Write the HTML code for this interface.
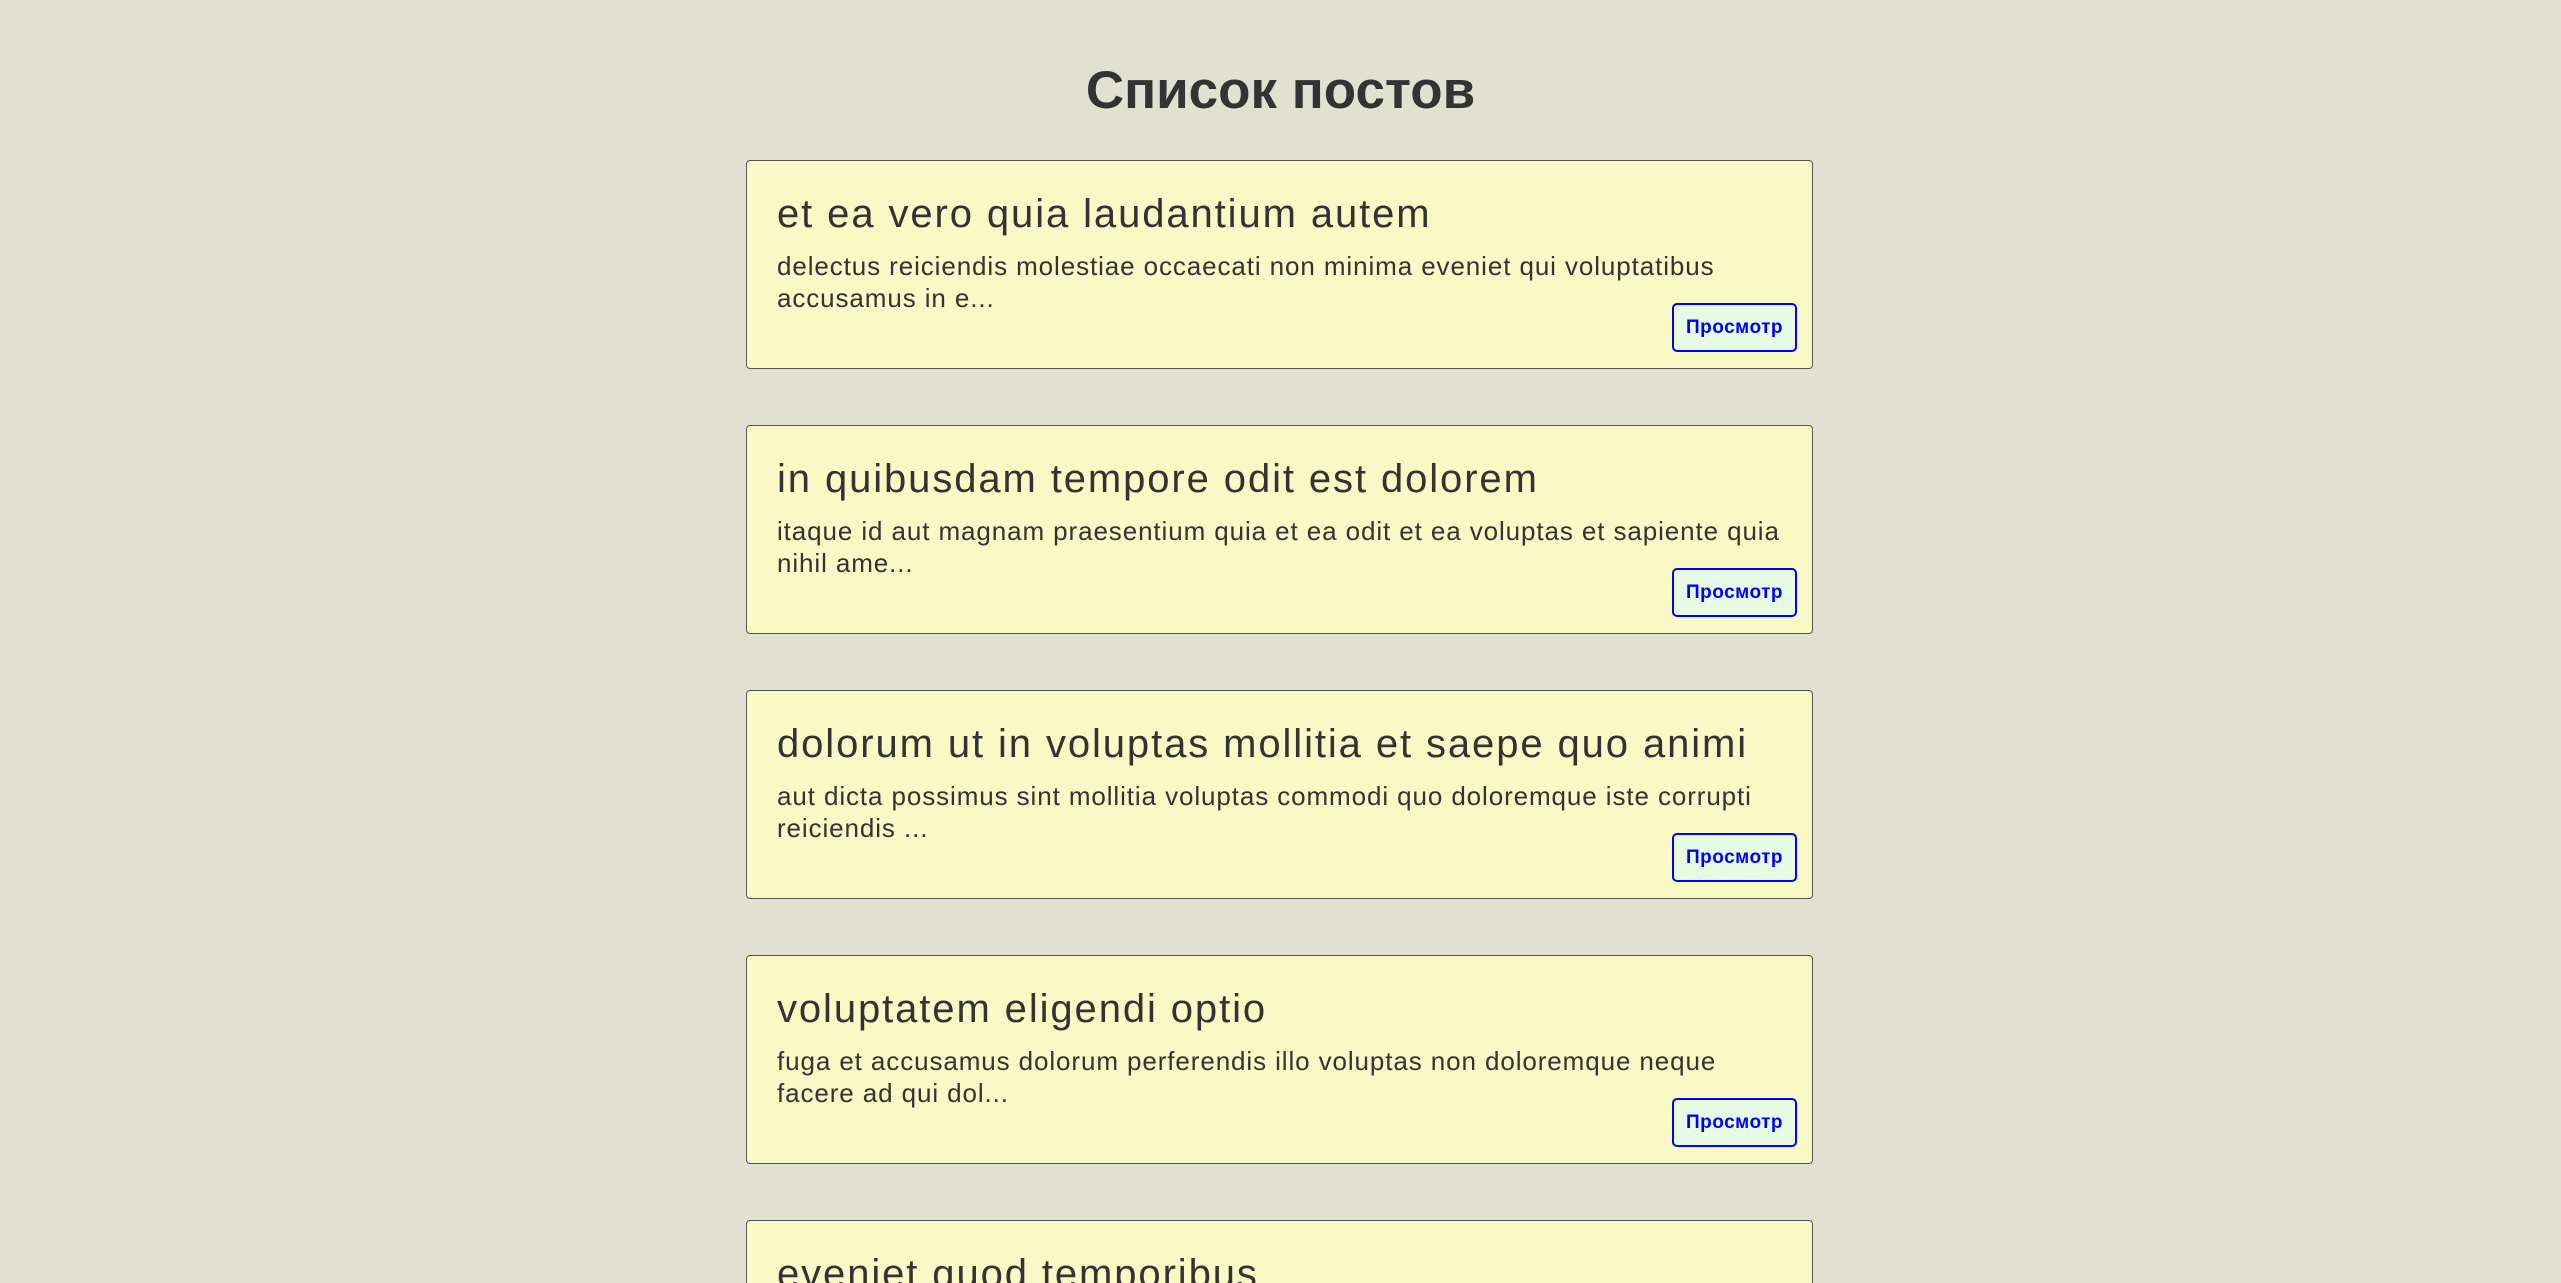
<!DOCTYPE html>
<html><head><meta charset="utf-8"><style>
html,body{margin:0;padding:0;width:2561px;height:1283px;overflow:hidden;background:#e1e1d1;font-family:"Liberation Sans","DejaVu Sans",sans-serif;color:#333;}
#wrap{position:relative;width:2561px;height:1283px;overflow:hidden;}
h1{position:absolute;top:0;left:0;width:2561px;text-align:center;margin:0;font-size:53px;font-weight:bold;line-height:1;padding-top:64px;color:#333;}
.card{position:absolute;left:746px;width:1065px;height:207px;background:#f9f9c5;border:1px solid #555;border-radius:4px;box-sizing:content-box;}
.t{position:absolute;left:30px;top:29px;font-size:40px;line-height:48px;white-space:nowrap;letter-spacing:1.9px;}
.b{position:absolute;left:30px;top:89px;font-size:26px;line-height:32px;white-space:nowrap;letter-spacing:0.9px;}
.btn{position:absolute;right:15px;bottom:16px;width:121px;height:45px;border:2px solid #0000ff;border-radius:5px;background:#e6fae4;color:#0000ff;font-size:19px;font-weight:bold;text-align:center;line-height:45px;letter-spacing:0.5px;}
</style></head><body><div id="wrap">
<h1>Список постов</h1>
<div class="card" style="top:160px"><div class="t">et ea vero quia laudantium autem</div><div class="b">delectus reiciendis molestiae occaecati non minima eveniet qui voluptatibus<br>accusamus in e...</div><div class="btn">Просмотр</div></div>
<div class="card" style="top:425px"><div class="t">in quibusdam tempore odit est dolorem</div><div class="b">itaque id aut magnam praesentium quia et ea odit et ea voluptas et sapiente quia<br>nihil ame...</div><div class="btn">Просмотр</div></div>
<div class="card" style="top:690px"><div class="t">dolorum ut in voluptas mollitia et saepe quo animi</div><div class="b">aut dicta possimus sint mollitia voluptas commodi quo doloremque iste corrupti<br>reiciendis ...</div><div class="btn">Просмотр</div></div>
<div class="card" style="top:955px"><div class="t">voluptatem eligendi optio</div><div class="b">fuga et accusamus dolorum perferendis illo voluptas non doloremque neque<br>facere ad qui dol...</div><div class="btn">Просмотр</div></div>
<div class="card" style="top:1220px"><div class="t">eveniet quod temporibus</div></div>
</div></body></html>
